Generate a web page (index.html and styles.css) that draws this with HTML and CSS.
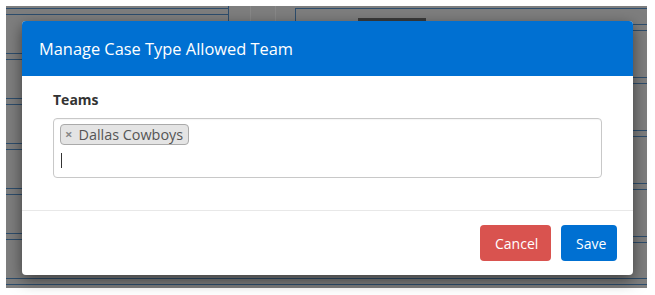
FILE: index.html
```html
<!DOCTYPE html>
<html>
<head>
<meta charset="utf-8">
<link rel="stylesheet" href="styles.css">
</head>
<body>
<div class="screen">
  <div class="backdrop">
    <div class="modal">
      <div class="modal-header">
        <h4 class="modal-title">Manage Case Type Allowed Team</h4>
      </div>
      <div class="modal-body">
        <label class="field-label">Teams</label>
        <div class="select-box">
          <div class="tag"><span class="tag-remove">×</span><span class="tag-text">Dallas Cowboys</span></div>
          <div class="search-line"><span class="caret-line"></span></div>
        </div>
      </div>
      <div class="modal-footer">
        <button class="btn btn-cancel">Cancel</button>
        <button class="btn btn-save">Save</button>
      </div>
    </div>
  </div>
</div>
</body>
</html>
```

FILE: styles.css
```css
html, body {
  margin: 0;
  padding: 0;
  background: #ffffff;
}
body {
  font-family: "Open Sans", "DejaVu Sans", sans-serif;
  width: 655px;
  height: 295px;
  overflow: hidden;
}
.screen {
  padding: 6px 8px 7px 6px;
}
.backdrop {
  width: 641px;
  height: 282px;
  box-sizing: border-box;
  padding: 15px 0 0 16px;
  background-color: #7e7e7e;
  background-image:
    linear-gradient(#3b3b3b, #3b3b3b),
    linear-gradient(#2d4d6c, #2d4d6c),
    linear-gradient(#2d4d6c, #2d4d6c),
    linear-gradient(#2d4d6c, #2d4d6c),
    linear-gradient(#2d4d6c, #2d4d6c),
    linear-gradient(#2d4d6c, #2d4d6c),
    linear-gradient(#888888, #888888),
    linear-gradient(#888888, #888888),
    repeating-linear-gradient(to bottom, transparent 0, transparent 2px, #2d4d6c 2px, #2d4d6c 3px, transparent 3px, transparent 8px, #2d4d6c 8px, #2d4d6c 9px, transparent 9px, transparent 45px),
    repeating-linear-gradient(to bottom, transparent 0, transparent 18px, #2d4d6c 18px, #2d4d6c 19px, transparent 19px, transparent 24px, #2d4d6c 24px, #2d4d6c 25px, transparent 25px, transparent 53px);
  background-repeat: no-repeat;
  background-size:
    68px 4px,
    1px 15px,
    1px 15px,
    352px 1px,
    100% 1px,
    100% 1px,
    1px 15px,
    1px 15px,
    222px 100%,
    14px 100%;
  background-position:
    352px 12px,
    222px 0,
    289px 2px,
    289px 2px,
    0 272px,
    0 278px,
    244px 0,
    269px 0,
    0 0,
    627px 0;
}
.modal {
  width: 611px;
  height: 254px;
  background: #ffffff;
  border-radius: 4px;
  box-shadow: 0 5px 15px rgba(0, 0, 0, 0.5);
  display: flex;
  flex-direction: column;
  overflow: hidden;
}
.modal-header {
  height: 55px;
  background: #0070d2;
  display: flex;
  align-items: center;
  padding: 0 17px;
  box-sizing: border-box;
  flex-shrink: 0;
}
.modal-title {
  margin: 0;
  color: #ffffff;
  font-size: 16.4px;
  font-weight: 400;
  line-height: 22px;
}
.modal-body {
  padding: 14px 31px 32px 31px;
  border-bottom: 1px solid #e8e8e8;
}
.field-label {
  display: block;
  font-size: 14px;
  font-weight: 700;
  color: #333333;
  line-height: 20px;
  margin-bottom: 8px;
}
.select-box {
  height: 60px;
  box-sizing: border-box;
  border: 1px solid #c8c8c8;
  border-radius: 4px;
  padding: 3px 6px 0 6px;
  box-shadow: inset 0 1px 1px rgba(0,0,0,0.04);
}
.tag {
  display: inline-flex;
  align-items: center;
  height: 21px;
  box-sizing: border-box;
  background: #e4e4e4;
  border: 1px solid #aaaaaa;
  border-radius: 4px;
  padding: 0 5px 0 4px;
  color: #555555;
  font-size: 14.4px;
  line-height: 19px;
}
.tag-remove {
  color: #888888;
  font-weight: 700;
  font-size: 13px;
  margin-right: 6px;
}
.search-line {
  height: 29px;
  display: flex;
  align-items: center;
  padding-top: 1px;
}
.caret-line {
  display: block;
  width: 1px;
  height: 15px;
  background: #333333;
  margin-left: 1px;
}
.modal-footer {
  display: flex;
  justify-content: flex-end;
  gap: 10px;
  padding: 14px 16px 14px 16px;
}
.btn {
  font-family: "Open Sans", "DejaVu Sans", sans-serif;
  height: 36px;
  border: none;
  border-radius: 4px;
  color: #ffffff;
  font-size: 14px;
  padding: 0 15px;
  cursor: pointer;
}
.btn-cancel {
  background: #d9534f;
  width: 71px;
}
.btn-save {
  background: #0070d2;
  width: 56px;
}
```
